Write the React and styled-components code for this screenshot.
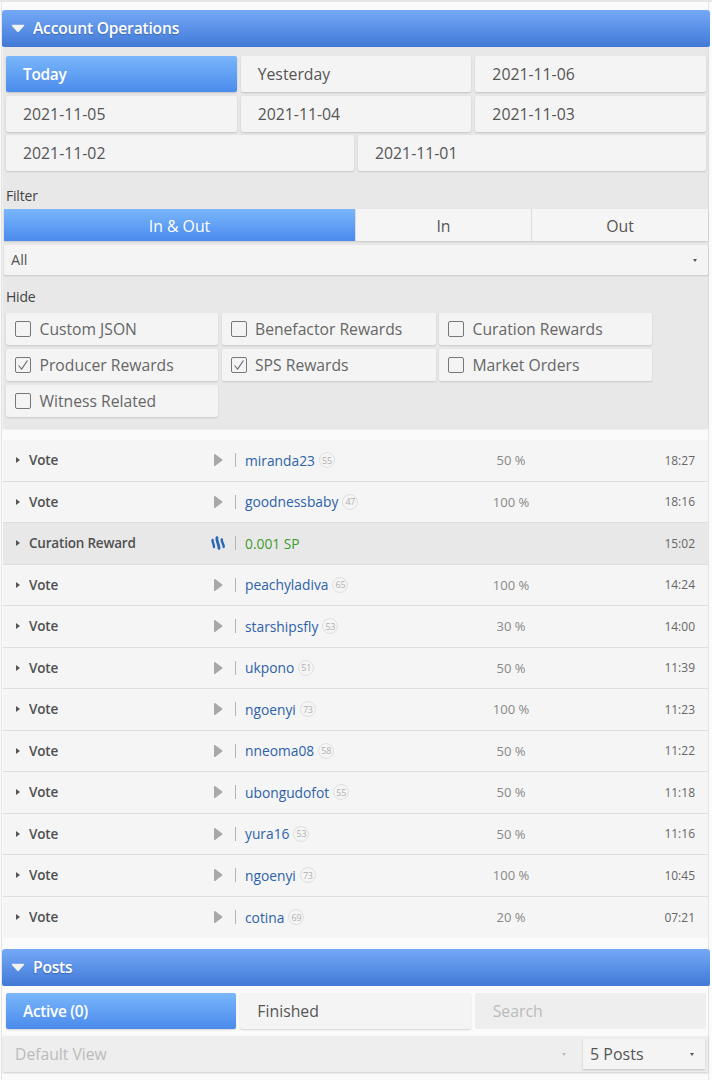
import React from "react";
import styled, { createGlobalStyle } from "styled-components";

const GlobalStyle = createGlobalStyle`
  html, body {
    margin: 0;
    padding: 0;
    background: #fbfbfb;
    font-family: "Open Sans", "Liberation Sans", sans-serif;
    color: #4a4a4a;
    overflow: hidden;
  }
`;

const dates = [
  ["Today", "Yesterday", "2021-11-06"],
  ["2021-11-05", "2021-11-04", "2021-11-03"],
  ["2021-11-02", "2021-11-01"],
];

const hideOptions = [
  ["Custom JSON", false],
  ["Benefactor Rewards", false],
  ["Curation Rewards", false],
  ["Producer Rewards", true],
  ["SPS Rewards", true],
  ["Market Orders", false],
  ["Witness Related", false],
];

const operations = [
  { name: "miranda23", rep: 55, value: "50 %", time: "18:27" },
  { name: "goodnessbaby", rep: 47, value: "100 %", time: "18:16" },
  { reward: "0.001 SP", time: "15:02" },
  { name: "peachyladiva", rep: 65, value: "100 %", time: "14:24" },
  { name: "starshipsfly", rep: 53, value: "30 %", time: "14:00" },
  { name: "ukpono", rep: 51, value: "50 %", time: "11:39" },
  { name: "ngoenyi", rep: 73, value: "100 %", time: "11:23" },
  { name: "nneoma08", rep: 58, value: "50 %", time: "11:22" },
  { name: "ubongudofot", rep: 55, value: "50 %", time: "11:18" },
  { name: "yura16", rep: 53, value: "50 %", time: "11:16" },
  { name: "ngoenyi", rep: 73, value: "100 %", time: "10:45" },
  { name: "cotina", rep: 69, value: "20 %", time: "07:21" },
];

export default function App() {
  return (
    <Page>
      <GlobalStyle />
      <Header>
        <HeaderArrow />
        Account Operations
      </Header>
      <Section>
        <DateGrid>
          {dates.map((row) => (
            <DateRow key={row[0]}>
              {row.map((label) => (
                <DateButton key={label} $active={label === "Today"}>
                  {label}
                </DateButton>
              ))}
            </DateRow>
          ))}
        </DateGrid>
        <FilterLabel>Filter</FilterLabel>
        <Segments>
          <Segment $active>In &amp; Out</Segment>
          <Segment>In</Segment>
          <Segment>Out</Segment>
        </Segments>
        <TypeSelect>
          All
          <Caret />
        </TypeSelect>
        <HideLabel>Hide</HideLabel>
        <HideGrid>
          {hideOptions.map(([label, checked]) => (
            <HideOption key={label}>
              <CheckBox>
                {checked && (
                  <svg width="14" height="14" viewBox="0 0 14 14">
                    <path d="M2.5 7.5 L5.6 11 L11.5 2.5" fill="none" stroke="#666" strokeWidth="1.1" />
                  </svg>
                )}
              </CheckBox>
              {label}
            </HideOption>
          ))}
        </HideGrid>
      </Section>

      <OperationList>
        {operations.map((op, i) => (
          <Operation key={i} $reward={!!op.reward}>
            <RowCaret />
            <OpTitle>{op.reward ? "Curation Reward" : "Vote"}</OpTitle>
            <OpIcon>{op.reward ? <SteemIcon /> : <PlayIcon />}</OpIcon>
            <Divider />
            <OpDetail>
              {op.reward ? (
                <Reward>{op.reward}</Reward>
              ) : (
                <>
                  <Author>{op.name}</Author>
                  <Rep>{op.rep}</Rep>
                </>
              )}
            </OpDetail>
            <Percent>{op.value}</Percent>
            <Time>{op.time}</Time>
          </Operation>
        ))}
      </OperationList>

      <Header>
        <HeaderArrow />
        Posts
      </Header>
      <PostsBar>
        <DateRow>
          <DateButton $active>Active (0)</DateButton>
          <DateButton>Finished</DateButton>
          <SearchBox>Search</SearchBox>
        </DateRow>
      </PostsBar>
      <ViewRow>
        <ViewSelect>
          Default View
          <Caret $faded />
        </ViewSelect>
        <CountSelect>
          5 Posts
          <Caret />
        </CountSelect>
      </ViewRow>
    </Page>
  );
}

function HeaderArrow() {
  return (
    <ArrowSvg width="14" height="9" viewBox="0 0 14 9">
      <path d="M1.4 0.8 H12.6 Q13.8 0.8 13 1.9 L7.8 7.8 Q7 8.6 6.2 7.8 L1 1.9 Q0.2 0.8 1.4 0.8 Z" fill="#f2f2f2" />
    </ArrowSvg>
  );
}

function PlayIcon() {
  return (
    <svg width="10" height="14" viewBox="0 0 10 14">
      <path d="M1 1.5 Q1 0.6 2 1 L9 6.2 Q10 7 9 7.8 L2 13 Q1 13.4 1 12.5 Z" fill="#a8a8a8" />
    </svg>
  );
}

function SteemIcon() {
  return (
    <svg width="14" height="14" viewBox="0 0 14 14">
      <g fill="none" stroke="#2a66b4" strokeLinecap="round">
        <path d="M1.6 4 C1 6 3.2 8 3 11" strokeWidth="2.4" />
        <path d="M6 1.6 C5 4.6 8.2 8.4 8 12.4" strokeWidth="2.8" />
        <path d="M10.8 3.4 C10.2 6 13 8 12.7 11" strokeWidth="2.4" />
      </g>
    </svg>
  );
}

const Page = styled.div`
  width: 712px;
  height: 1080px;
  padding: 10px 2px 0;
  box-sizing: border-box;
  border-top: 2px solid #e6e6e6;
  overflow: hidden;
  background:
    linear-gradient(#e4e4e4, #e4e4e4) 1px 0 / 1px 100% no-repeat,
    linear-gradient(#e4e4e4, #e4e4e4) 708px 0 / 1px 100% no-repeat;
`;

const Header = styled.div`
  height: 37px;
  margin-top: -2px;
  display: flex;
  align-items: center;
  gap: 8px;
  padding-left: 9px;
  padding-bottom: 1px;
  box-sizing: border-box;
  border-radius: 3px 3px 2px 2px;
  background: linear-gradient(to bottom, #75a9f7, #4179d6);
  color: #fff;
  font-size: 15.6px;
  font-weight: 600;
  letter-spacing: -0.2px;
  text-shadow: 0 1px 1px rgba(0, 0, 0, 0.25);
`;

const ArrowSvg = styled.svg`
  margin-top: 1px;
`;

const Section = styled.div`
  height: 381px;
  box-sizing: border-box;
  margin: 0 2px 0 1px;
  padding: 9px 0 0 1px;
  background: #e8e8e8;
  box-shadow: 0 1px 2px rgba(0, 0, 0, 0.12);
`;

const DateGrid = styled.div`
  display: flex;
  flex-direction: column;
  gap: 3.5px;
`;

const DateRow = styled.div`
  display: flex;
  gap: 4px;
  padding: 0 2px;
`;

const DateButton = styled.div`
  flex: 1 1 0;
  height: 36px;
  display: flex;
  align-items: center;
  padding-left: 17px;
  border-radius: 2px;
  font-size: ${({ $active }) => ($active ? "15.4px" : "15.8px")};
  font-weight: ${({ $active }) => ($active ? 600 : 400)};
  letter-spacing: ${({ $active }) => ($active ? "-0.3px" : "0")};
  color: ${({ $active }) => ($active ? "#fff" : "#555")};
  background: ${({ $active }) =>
    $active ? "linear-gradient(to bottom, #7ab6fb, #4a8bec)" : "#f4f4f4"};
  box-shadow: 0 1px 2px rgba(0, 0, 0, 0.16);
`;

const FilterLabel = styled.div`
  margin: 16px 0 0 2px;
  height: 22px;
  line-height: 18px;
  font-size: 14px;
  letter-spacing: -0.2px;
  color: #444;
`;

const Segments = styled.div`
  display: grid;
  grid-template-columns: 351px 176px 177px;
  height: 32px;
  box-shadow: 0 1px 2px rgba(0, 0, 0, 0.14);
  border-radius: 2px;
`;

const Segment = styled.div`
  display: flex;
  align-items: center;
  justify-content: center;
  padding-top: 1px;
  box-sizing: border-box;
  font-size: 15.8px;
  color: ${({ $active }) => ($active ? "#fff" : "#555")};
  background: ${({ $active }) =>
    $active ? "linear-gradient(to bottom, #7ab6fb, #4a8bec)" : "#f5f5f5"};
  border-left: ${({ $active }) => ($active ? "none" : "1px solid #dcdcdc")};
`;

const TypeSelect = styled.div`
  position: relative;
  height: 30px;
  margin-top: 4px;
  display: flex;
  align-items: center;
  padding-left: 7px;
  padding-bottom: 1px;
  box-sizing: border-box;
  font-size: 14.5px;
  color: #555;
  background: #f4f4f4;
  border-radius: 2px;
  box-shadow: 0 1px 2px rgba(0, 0, 0, 0.14);
`;

const Caret = styled.span`
  position: absolute;
  right: 11px;
  top: 50%;
  margin-top: -1px;
  border-left: 2px solid transparent;
  border-right: 2px solid transparent;
  border-top: 3px solid ${({ $faded }) => ($faded ? "#bbb" : "#555")};
`;

const HideLabel = styled(FilterLabel)`
  margin-top: 13px;
  height: 25px;
`;

const HideGrid = styled.div`
  display: grid;
  grid-template-columns: 212px 214px 213px;
  column-gap: 3.5px;
  row-gap: 4px;
  padding-left: 2px;
`;

const HideOption = styled.div`
  height: 32px;
  display: flex;
  align-items: center;
  gap: 8.5px;
  padding-left: 9px;
  font-size: 15.7px;
  color: #666;
  background: #f4f4f4;
  border-radius: 2px;
  box-shadow: 0 1px 2px rgba(0, 0, 0, 0.14);
`;

const CheckBox = styled.span`
  width: 14px;
  height: 14px;
  display: flex;
  align-items: center;
  justify-content: center;
  border: 1.5px solid #777;
  border-radius: 2px;
`;

const OperationList = styled.div`
  margin: 12px 2px 0 1px;
  padding-bottom: 13px;
`;

const Operation = styled.div`
  height: 41.5px;
  box-sizing: border-box;
  display: flex;
  align-items: center;
  padding-left: 13px;
  background: ${({ $reward }) => ($reward ? "#e8e8e8" : "#f5f5f5")};
  border-bottom: 1px solid #dedede;
  &:last-child {
    border-bottom: none;
  }
`;

const RowCaret = styled.span`
  border-top: 3px solid transparent;
  border-bottom: 3px solid transparent;
  border-left: 4px solid #555;
  margin-right: 9px;
`;

const OpTitle = styled.div`
  width: 176px;
  font-size: 13.5px;
  font-weight: 600;
  letter-spacing: -0.2px;
  color: #505050;
`;

const OpIcon = styled.div`
  width: 20px;
  display: flex;
  justify-content: center;
  margin-left: 3px;
`;

const Divider = styled.span`
  width: 1px;
  height: 14px;
  margin: 0 9px 0 7px;
  background: #b4b4b4;
`;

const OpDetail = styled.div`
  width: 236px;
  display: flex;
  align-items: center;
  gap: 4px;
`;

const Author = styled.span`
  font-size: 13.8px;
  color: #2d62a8;
`;

const Rep = styled.span`
  width: 14px;
  height: 14px;
  display: flex;
  align-items: center;
  justify-content: center;
  border: 1px solid #e0e0e0;
  border-radius: 50%;
  font-size: 9px;
  letter-spacing: -0.3px;
  color: #b0b0b0;
`;

const Reward = styled.span`
  font-size: 13.8px;
  color: #3f9a2f;
`;

const Percent = styled.div`
  width: 60px;
  text-align: center;
  font-size: 13px;
  color: #888;
`;

const Time = styled.div`
  margin-left: auto;
  margin-right: 13px;
  font-size: 12px;
  color: #666;
`;

const PostsBar = styled.div`
  padding: 7px 2px 0;
`;

const SearchBox = styled.div`
  flex: 1 1 0;
  height: 36px;
  display: flex;
  align-items: center;
  padding-left: 18px;
  font-size: 15.8px;
  color: #bbb;
  background: #eee;
  border-radius: 2px;
`;

const ViewRow = styled.div`
  margin: 7px 2px 0 1px;
  height: 36px;
  padding: 0 3px 0 3px;
  display: flex;
  align-items: center;
  gap: 6px;
  background: #eeeeee;
  box-shadow: 0 1px 2px rgba(0, 0, 0, 0.2);
`;

const ViewSelect = styled.div`
  position: relative;
  flex: 1;
  height: 30px;
  display: flex;
  align-items: center;
  padding-left: 9px;
  font-size: 15.7px;
  color: #bbb;
`;

const CountSelect = styled.div`
  position: relative;
  width: 122px;
  height: 30px;
  display: flex;
  align-items: center;
  padding-left: 7px;
  box-sizing: border-box;
  font-size: 16px;
  color: #555;
  background: #f4f4f4;
  box-shadow: 0 1px 2px rgba(0, 0, 0, 0.2);
`;
